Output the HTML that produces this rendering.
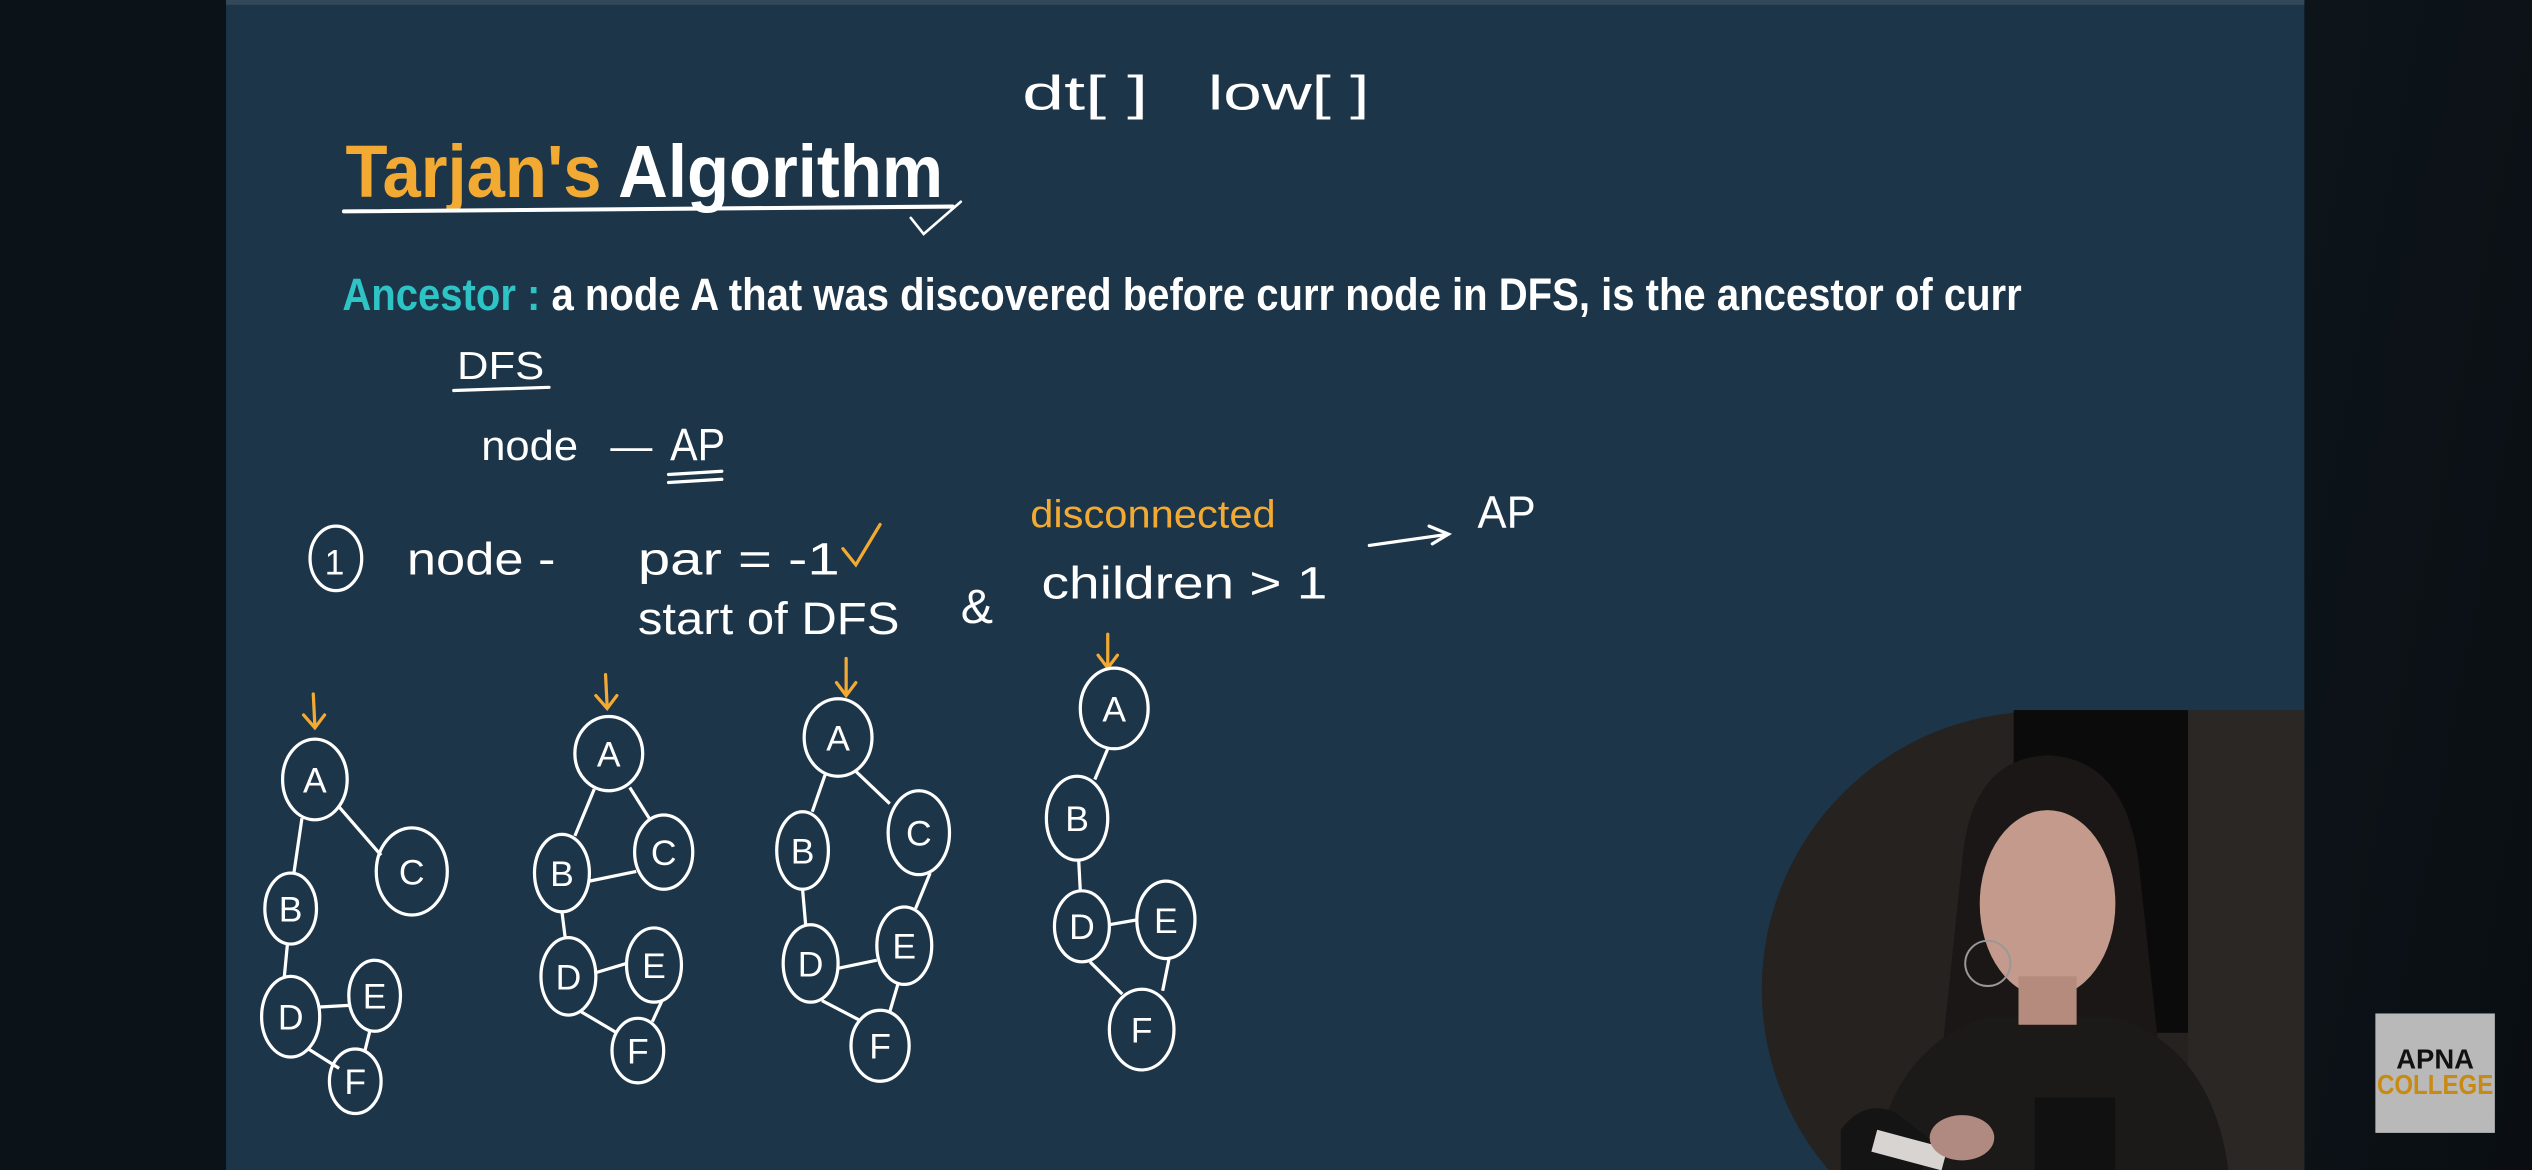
<!DOCTYPE html>
<html><head><meta charset="utf-8"><style>
html,body{margin:0;padding:0;width:2532px;height:1170px;overflow:hidden;background:#0b1116}
svg{display:block}
</style></head><body>
<svg width="2532" height="1170" viewBox="0 0 1568 725" preserveAspectRatio="none" xmlns="http://www.w3.org/2000/svg">
<defs>
<linearGradient id="rg" x1="0" y1="0" x2="1" y2="1"><stop offset="0" stop-color="#0d151b"/><stop offset="1" stop-color="#0a0e12"/></linearGradient>
<clipPath id="cam"><rect x="1000" y="400" width="427" height="325"/></clipPath>
</defs>
<rect x="0" y="0" width="1568" height="725" fill="#0c1318"/>
<rect x="1427" y="0" width="141" height="725" fill="url(#rg)"/>
<rect x="140" y="0" width="1287" height="725" fill="#1c3549"/>
<rect x="140" y="0" width="1287" height="3" fill="#33495a"/>

<g font-family="'Liberation Sans Narrow','Liberation Sans',sans-serif" font-weight="bold">
<text x="214" y="122" font-size="46" textLength="370" lengthAdjust="spacingAndGlyphs"><tspan fill="#f2aa33">Tarjan's</tspan><tspan fill="#ffffff"> Algorithm</tspan></text>
<text x="212" y="192" font-size="28" textLength="1040" lengthAdjust="spacingAndGlyphs"><tspan fill="#2ec3c4">Ancestor : </tspan><tspan fill="#ffffff">a node A that was discovered before curr node in DFS, is the ancestor of curr</tspan></text>
</g>
<g fill="none" stroke="#fff" stroke-width="2.5" stroke-linecap="round">
<path d="M213 131 L590 128"/>
<path d="M564 135 L572 145 L595 125" stroke-width="1.6"/>
</g>

<g font-family="'Liberation Sans',sans-serif" fill="#fff" font-weight="normal">
<text x="633" y="68" font-size="30" textLength="78" lengthAdjust="spacingAndGlyphs">dt[ ]</text>
<text x="748" y="68" font-size="30" textLength="100" lengthAdjust="spacingAndGlyphs">low[ ]</text>
<text x="283" y="235" font-size="24" textLength="54" lengthAdjust="spacingAndGlyphs">DFS</text>
<text x="298" y="285" font-size="26" textLength="60" lengthAdjust="spacingAndGlyphs">node</text>
<text x="378" y="285" font-size="26">—</text>
<text x="415" y="285" font-size="28" textLength="34" lengthAdjust="spacingAndGlyphs">AP</text>
<text x="252" y="356" font-size="28" textLength="92" lengthAdjust="spacingAndGlyphs">node -</text>
<text x="395" y="356" font-size="28" textLength="125" lengthAdjust="spacingAndGlyphs">par = -1</text>
<text x="395" y="393" font-size="28" textLength="162" lengthAdjust="spacingAndGlyphs">start of DFS</text>
<text x="595" y="386" font-size="30">&amp;</text>
<text x="645" y="371" font-size="28" textLength="177" lengthAdjust="spacingAndGlyphs">children &gt; 1</text>
<text x="915" y="327" font-size="28" textLength="36" lengthAdjust="spacingAndGlyphs">AP</text>
<text x="201" y="356" font-size="22">1</text>
</g>
<text x="638" y="327" font-family="'Liberation Sans',sans-serif" font-size="24" fill="#f2aa33" textLength="152" lengthAdjust="spacingAndGlyphs">disconnected</text>

<g fill="none" stroke="#fff" stroke-width="2" stroke-linecap="round">
<path d="M281 242 L340 240"/>
<path d="M414 294 L447 292 M414 299 L447 297"/>
<ellipse cx="208" cy="346" rx="16" ry="20"/>
<path d="M848 338 L897 331 M885 326 L897 331 L887 337"/>
</g>
<path d="M522 340 L530 350 L545 325" fill="none" stroke="#f2aa33" stroke-width="2" stroke-linecap="round"/>

<!-- orange arrows -->
<g fill="none" stroke="#f2aa33" stroke-width="2" stroke-linecap="round">
<path d="M194 430 L195 450 M188 443 L195 451 L201 443"/>
<path d="M375 418 L376 438 M369 431 L376 439 L382 431"/>
<path d="M524 408 L524 430 M518 423 L524 431 L530 423"/>
<path d="M686 393 L686 413 M680 406 L686 414 L692 406"/>
</g>

<!-- graphs -->
<g fill="none" stroke="#fff" stroke-width="2">
<!-- g1 -->
<ellipse cx="195" cy="483" rx="20" ry="25"/><ellipse cx="255" cy="540" rx="22" ry="27"/>
<ellipse cx="180" cy="563" rx="16" ry="22"/><ellipse cx="180" cy="630" rx="18" ry="25"/>
<ellipse cx="232" cy="617" rx="16" ry="22"/><ellipse cx="220" cy="670" rx="16" ry="20"/>
<path d="M187 507 L182 541 M210 500 L236 530 M178 585 L176 606 M198 624 L216 623 M191 650 L210 662 M229 639 L226 651"/>
<!-- g2 -->
<ellipse cx="377" cy="467" rx="21" ry="23"/><ellipse cx="348" cy="541" rx="17" ry="24"/>
<ellipse cx="411" cy="528" rx="18" ry="23"/><ellipse cx="352" cy="605" rx="17" ry="24"/>
<ellipse cx="405" cy="598" rx="17" ry="23"/><ellipse cx="395" cy="651" rx="16" ry="20"/>
<path d="M368 489 L356 518 M390 488 L402 507 M365 546 L394 540 M348 565 L350 581 M368 603 L388 597 M360 627 L382 640 M410 620 L404 633"/>
<!-- g3 -->
<ellipse cx="519" cy="457" rx="21" ry="24"/><ellipse cx="497" cy="527" rx="16" ry="24"/>
<ellipse cx="569" cy="516" rx="19" ry="26"/><ellipse cx="502" cy="597" rx="17" ry="24"/>
<ellipse cx="560" cy="586" rx="17" ry="24"/><ellipse cx="545" cy="648" rx="18" ry="22"/>
<path d="M511 480 L503 503 M530 478 L551 498 M497 551 L499 574 M576 541 L567 563 M519 600 L543 595 M509 620 L532 632 M556 610 L551 627"/>
<!-- g4 -->
<ellipse cx="690" cy="439" rx="21" ry="25"/><ellipse cx="667" cy="507" rx="19" ry="26"/>
<ellipse cx="670" cy="574" rx="17" ry="22"/><ellipse cx="722" cy="570" rx="18" ry="24"/>
<ellipse cx="707" cy="638" rx="20" ry="25"/>
<path d="M686 464 L678 483 M668 533 L669 552 M687 573 L704 570 M675 596 L695 616 M724 594 L720 614"/>
</g>
<g font-family="'Liberation Sans',sans-serif" font-size="22" fill="#fff" text-anchor="middle">
<text x="195" y="491">A</text><text x="255" y="548">C</text><text x="180" y="571">B</text><text x="180" y="638">D</text><text x="232" y="625">E</text><text x="220" y="678">F</text>
<text x="377" y="475">A</text><text x="348" y="549">B</text><text x="411" y="536">C</text><text x="352" y="613">D</text><text x="405" y="606">E</text><text x="395" y="659">F</text>
<text x="519" y="465">A</text><text x="497" y="535">B</text><text x="569" y="524">C</text><text x="502" y="605">D</text><text x="560" y="594">E</text><text x="545" y="656">F</text>
<text x="690" y="447">A</text><text x="667" y="515">B</text><text x="670" y="582">D</text><text x="722" y="578">E</text><text x="707" y="646">F</text>
</g>

<!-- webcam -->
<g clip-path="url(#cam)">
<circle cx="1263" cy="613" r="172" fill="#252220"/>
<rect x="1247" y="440" width="108" height="200" fill="#0c0b0b"/>
<rect x="1355" y="440" width="80" height="300" fill="#2a2724"/>
<path d="M1215 535 Q1220 470 1268 468 Q1318 470 1325 540 L1345 725 L1195 725 Z" fill="#1a1716"/>
<path d="M1160 725 Q1170 650 1230 630 L1310 630 Q1370 650 1380 725 Z" fill="#1c1a19"/>
<ellipse cx="1268" cy="560" rx="42" ry="58" fill="#c39a8c"/>
<path d="M1224 530 Q1230 480 1268 482 Q1310 484 1312 530 Q1300 500 1268 498 Q1236 500 1224 530 Z" fill="#1a1716"/>
<rect x="1250" y="605" width="36" height="30" fill="#b58b7e"/>
<circle cx="1231" cy="597" r="14" fill="none" stroke="#999" stroke-width="1.2"/>
<rect x="1260" y="680" width="50" height="45" fill="#121111"/>
<path d="M1140 700 Q1155 680 1175 690 L1200 710 L1190 725 L1140 725 Z" fill="#151414"/>
<rect x="1160" y="705" width="45" height="14" fill="#d8d4d2" transform="rotate(15 1180 712)"/>
<ellipse cx="1215" cy="705" rx="20" ry="14" fill="#b08a80"/>
</g>

<!-- logo -->
<rect x="1471" y="628" width="74" height="74" fill="#b9b9b9"/>
<text x="1508" y="662" font-family="'Liberation Sans Narrow','Liberation Sans',sans-serif" font-weight="bold" font-size="17" fill="#111" text-anchor="middle">APNA</text>
<text x="1508" y="678" font-family="'Liberation Sans Narrow','Liberation Sans',sans-serif" font-weight="bold" font-size="17" fill="#c98a14" text-anchor="middle" textLength="72" lengthAdjust="spacingAndGlyphs">COLLEGE</text>
</svg>
</body></html>
